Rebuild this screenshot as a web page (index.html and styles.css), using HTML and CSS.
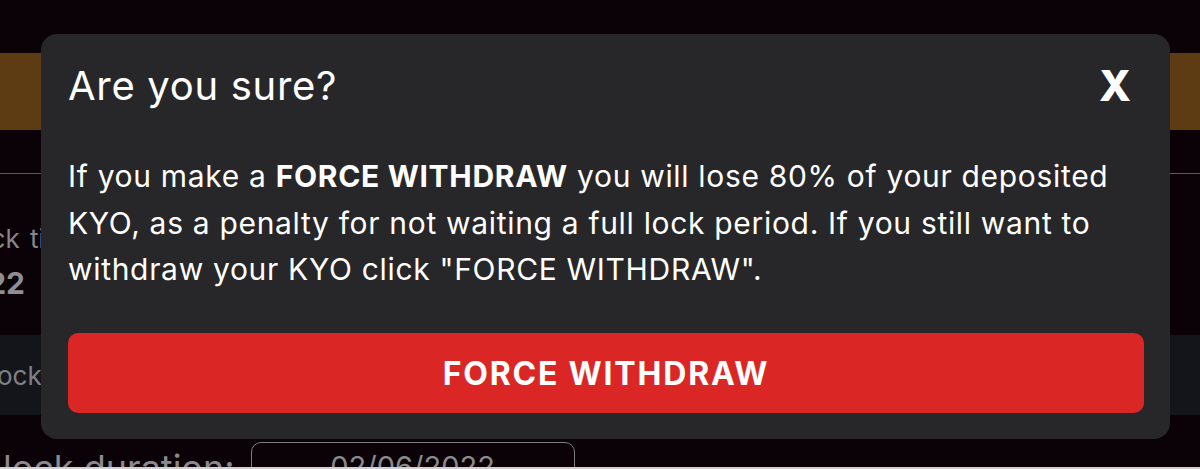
FILE: index.html
```html
<!DOCTYPE html>
<html lang="en">
<head>
<meta charset="utf-8">
<title>Are you sure?</title>
<link rel="stylesheet" href="styles.css">
</head>
<body>
<div class="page">
  <div class="top-gap"></div>
  <div class="band"></div>
  <div class="gap-1"></div>
  <div class="section">
    <div class="label">Unlock time</div>
    <div class="value">2022</div>
    <div class="bar"><span class="bar-text">Unlock</span></div>
    <div class="duration-row">
      <span class="duration-label">lock duration:</span>
      <span class="date-box">02/06/2022</span>
    </div>
  </div>
  <div class="bottom-line"></div>
</div>

<div class="modal">
  <div class="modal-head">
    <h2 class="modal-title">Are you sure?</h2>
    <span class="modal-close">X</span>
  </div>
  <p class="modal-text">If you make a <strong>FORCE WITHDRAW</strong> you will lose 80% of your deposited<br>KYO, as a penalty for not waiting a full lock period. If you still want to<br>withdraw your KYO click "FORCE WITHDRAW".</p>
  <button class="force-btn" type="button">FORCE WITHDRAW</button>
</div>
</body>
</html>
```

FILE: styles.css
```css
html, body {
  margin: 0;
  padding: 0;
}
body {
  width: 1200px;
  height: 469px;
  overflow: hidden;
  background: #0b0208;
  font-family: Inter, "Liberation Sans", sans-serif;
  position: relative;
}
.page {
  display: flex;
  flex-direction: column;
  height: 469px;
}
.page > * { flex-shrink: 0; }
.top-gap { height: 53px; }
.band { height: 77px; background: #5d3b13; }
.gap-1 { height: 43px; }
.section {
  flex: 1 1 auto;
  min-height: 0;
  border-top: 1px solid #5b5b5e;
  display: flex;
  flex-direction: column;
  overflow: hidden;
}
.section > * { flex-shrink: 0; }
.label {
  color: #86868c;
  font-size: 26px;
  line-height: 30px;
  margin-top: 50px;
  margin-left: -66px;
  word-spacing: 3px;
  white-space: nowrap;
}
.value {
  color: #8f8f93;
  font-size: 30px;
  font-weight: 700;
  line-height: 30px;
  margin-top: 14px;
  margin-left: -52px;
}
.bar {
  margin-top: 37px;
  height: 80px;
  background: #14141b;
  display: flex;
  align-items: center;
}
.bar-text {
  color: #808086;
  font-size: 26px;
  margin-left: -44px;
}
.duration-row {
  margin-top: 27px;
  display: flex;
  align-items: flex-start;
  gap: 16px;
}
.duration-label {
  color: #8a8a8e;
  font-size: 36px;
  line-height: 36px;
  margin-top: 8px;
  margin-left: 3px;
  white-space: nowrap;
}
.date-box {
  width: 322px;
  height: 44px;
  border: 1px solid #7d7d80;
  border-radius: 10px;
  color: #8a8a8e;
  font-size: 29px;
  line-height: 48px;
  text-align: center;
}
.bottom-line {
  height: 2px;
  background: #cfcfcf;
}

.modal {
  position: absolute;
  left: 41px;
  top: 34px;
  width: 1129px;
  height: 405px;
  box-sizing: border-box;
  background: #272729;
  border-radius: 16px;
  padding: 28px 26px 26px 27px;
  display: flex;
  flex-direction: column;
}
.modal-head {
  display: flex;
  justify-content: space-between;
  align-items: center;
  height: 48px;
}
.modal-title {
  margin: 0;
  color: #ffffff;
  font-size: 40px;
  font-weight: 400;
  line-height: 48px;
  letter-spacing: 0.7px;
}
.modal-close {
  color: #ffffff;
  font-size: 42px;
  font-weight: 800;
  line-height: 48px;
  margin-right: 13px;
}
.modal-text {
  margin: 43px 0 0 0;
  color: #ffffff;
  font-size: 30px;
  line-height: 46.5px;
  letter-spacing: 0.68px;
  white-space: nowrap;
}
.modal-text strong {
  font-weight: 700;
}
.force-btn {
  margin-top: auto;
  flex-shrink: 0;
  height: 80px;
  width: 100%;
  border: none;
  border-radius: 10px;
  background: #db2626;
  color: #ffffff;
  font-family: Inter, "Liberation Sans", sans-serif;
  font-size: 32px;
  font-weight: 700;
  letter-spacing: 1.8px;
  padding: 0;
}
```
